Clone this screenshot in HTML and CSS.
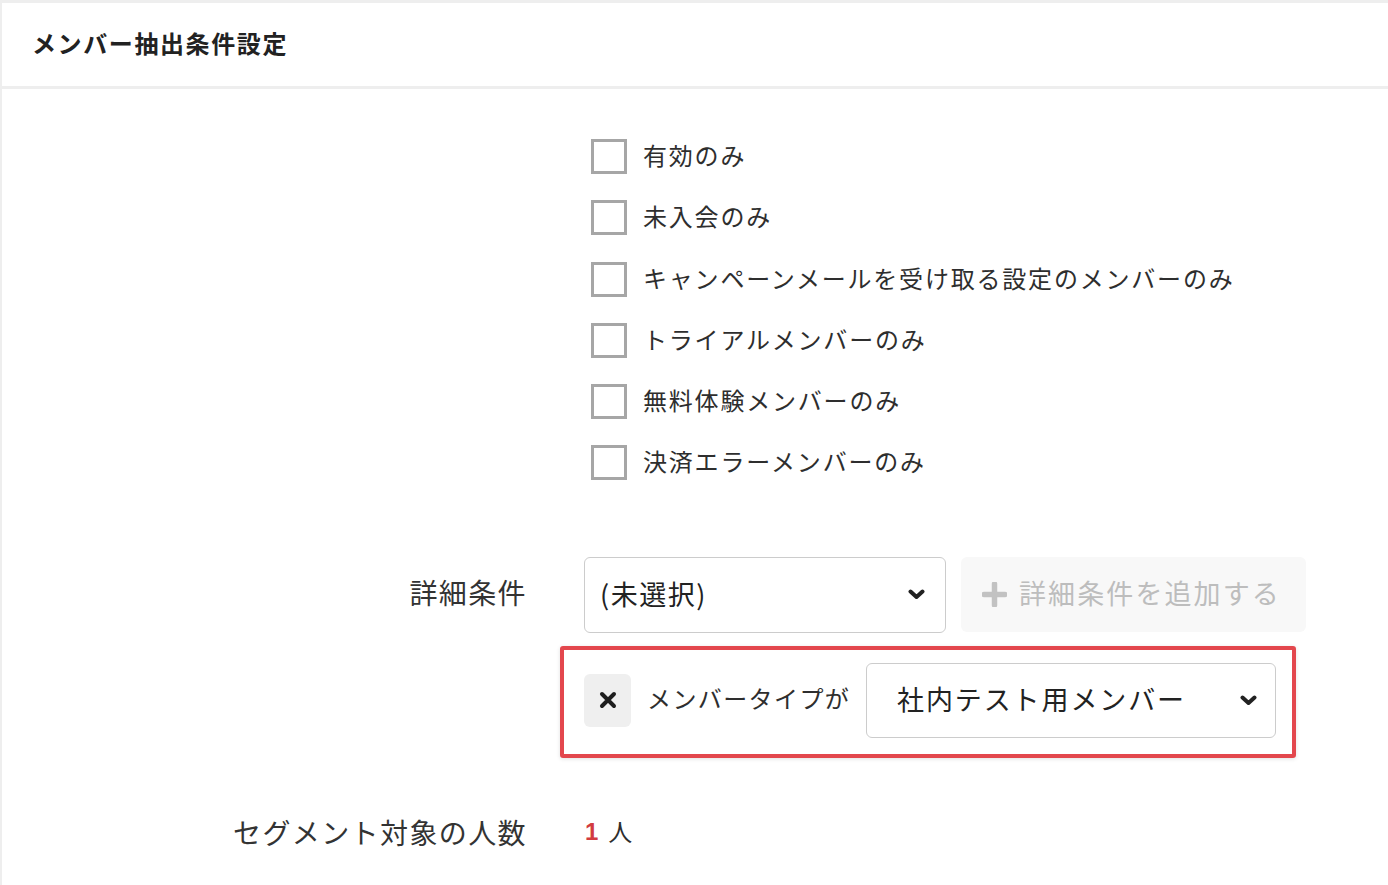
FILE: index.html
```html
<!DOCTYPE html>
<html lang="ja">
<head>
<meta charset="utf-8">
<title>メンバー抽出条件設定</title>
<link rel="stylesheet" href="styles.css">
</head>
<body>
<div class="panel">
  <div class="panel-header">
    <h2 class="panel-title">メンバー抽出条件設定</h2>
  </div>
  <div class="panel-body">
    <div class="form-row row-checks">
      <div class="label"></div>
      <div class="field">
        <ul class="check-list">
          <li class="check-item"><span class="check-box"></span><span class="check-text">有効のみ</span></li>
          <li class="check-item"><span class="check-box"></span><span class="check-text">未入会のみ</span></li>
          <li class="check-item"><span class="check-box"></span><span class="check-text">キャンペーンメールを受け取る設定のメンバーのみ</span></li>
          <li class="check-item"><span class="check-box"></span><span class="check-text">トライアルメンバーのみ</span></li>
          <li class="check-item"><span class="check-box"></span><span class="check-text">無料体験メンバーのみ</span></li>
          <li class="check-item"><span class="check-box"></span><span class="check-text">決済エラーメンバーのみ</span></li>
        </ul>
      </div>
    </div>

    <div class="form-row row-detail">
      <div class="label label-tall">詳細条件</div>
      <div class="field">
        <div class="detail-controls">
          <div class="select select-detail">
            <span class="select-text">(未選択)</span>
            <svg class="chevron" width="17" height="11" viewBox="0 0 17 11"><polyline points="2.5,2.5 8.5,8 14.5,2.5" fill="none" stroke="#222" stroke-width="4" stroke-linecap="round" stroke-linejoin="round"/></svg>
          </div>
          <div class="add-btn">
            <svg class="plus" width="25" height="25" viewBox="0 0 25 25"><path d="M12.5 2v21M2 12.5h21" stroke="#c2c2c2" stroke-width="5.5" stroke-linecap="round"/></svg>
            <span class="add-text">詳細条件を追加する</span>
          </div>
        </div>
        <div class="condition">
          <div class="remove-btn">
            <svg width="18" height="18" viewBox="0 0 18 18"><path d="M3 3l12 12M15 3L3 15" stroke="#1e1e1e" stroke-width="4" stroke-linecap="round"/></svg>
          </div>
          <span class="cond-label">メンバータイプが</span>
          <div class="select select-cond">
            <span class="select-text select-text-cond">社内テスト用メンバー</span>
            <svg class="chevron" width="17" height="11" viewBox="0 0 17 11"><polyline points="2.5,2.5 8.5,8 14.5,2.5" fill="none" stroke="#222" stroke-width="4" stroke-linecap="round" stroke-linejoin="round"/></svg>
          </div>
        </div>
      </div>
    </div>

    <div class="form-row row-count">
      <div class="label label-count">セグメント対象の人数</div>
      <div class="field count-field">
        <span class="count-num">1</span>
        <span class="count-unit">人</span>
      </div>
    </div>
  </div>
</div>
</body>
</html>
```

FILE: styles.css
```css
* {
  box-sizing: border-box;
}

html, body {
  margin: 0;
  padding: 0;
}

body {
  background: #eeeeee;
  font-family: "Noto Sans CJK JP", "Noto Sans", sans-serif;
  color: #333333;
  height: 885px;
  overflow: hidden;
}

.panel {
  margin: 3px 0 0 2px;
  background: #ffffff;
  min-height: 900px;
}

.panel-header {
  height: 86px;
  border-bottom: 3px solid #eeeeee;
  display: flex;
  align-items: center;
  padding-left: 30px;
}

.panel-title {
  margin: 0;
  font-size: 24px;
  font-weight: 700;
  letter-spacing: 1.6px;
  color: #222222;
  line-height: 1;
  padding-bottom: 3px;
}

.panel-body {
  padding-top: 37px;
}

.form-row {
  display: grid;
  grid-template-columns: 525px 1fr;
  column-gap: 57px;
}

.label {
  text-align: right;
  font-size: 28px;
  letter-spacing: 1.4px;
  color: #333333;
}

.check-list {
  list-style: none;
  margin: 0;
  padding: 0 0 0 7px;
}

.check-item {
  height: 61.25px;
  display: flex;
  align-items: center;
  gap: 16px;
}

.check-box {
  width: 36px;
  height: 35px;
  border: 3px solid #a6a6a6;
  background: #ffffff;
  flex: none;
}

.check-text {
  font-size: 24px;
  letter-spacing: 1.8px;
  color: #2e2e2e;
  line-height: 1;
  padding-bottom: 3px;
}

.row-detail {
  margin-top: 63px;
}

.label-tall {
  line-height: 70px;
}

.detail-controls {
  display: flex;
  gap: 15px;
}

.select {
  display: flex;
  align-items: center;
  justify-content: space-between;
  border: 1px solid #cccccc;
  border-radius: 6px;
  background: #ffffff;
}

.select-detail {
  width: 362px;
  height: 76px;
  padding: 0 20px 0 15px;
}

.select-text {
  font-size: 27px;
  letter-spacing: 1.5px;
  color: #222222;
  line-height: 1;
  padding-bottom: 3px;
}

.chevron {
  flex: none;
  display: block;
}

.add-btn {
  width: 345px;
  height: 75px;
  background: #f8f8f8;
  border-radius: 6px;
  display: flex;
  align-items: center;
  padding-left: 21px;
  gap: 12px;
}

.plus {
  display: block;
  flex: none;
}

.add-text {
  font-size: 27px;
  letter-spacing: 2.1px;
  color: #bdbdbd;
  line-height: 1;
  padding-bottom: 3px;
}

.condition {
  margin: 13px 0 0 -24px;
  width: 736px;
  border: 4px solid #e3474d;
  border-radius: 3px;
  padding: 13px 16px 16px 20px;
  display: flex;
  align-items: center;
  box-shadow: 0 1px 4px rgba(0, 0, 0, 0.12);
}

.remove-btn {
  width: 47px;
  height: 53px;
  background: #efefef;
  border-radius: 6px;
  display: flex;
  align-items: center;
  justify-content: center;
  flex: none;
}

.remove-btn svg {
  display: block;
}

.cond-label {
  margin-left: 16px;
  font-size: 24px;
  letter-spacing: 1.4px;
  color: #2e2e2e;
  line-height: 1;
  padding-bottom: 4px;
  flex: none;
}

.select-cond {
  margin-left: auto;
  width: 410px;
  height: 75px;
  padding: 0 18px 0 30px;
}

.select-text-cond {
  letter-spacing: 1.9px;
}

.row-count {
  margin-top: 49px;
  height: 50px;
  align-items: center;
}

.label-count {
  line-height: 46px;
}

.count-field {
  display: flex;
  align-items: center;
  padding-left: 1px;
  gap: 10px;
}

.count-num {
  font-family: "Liberation Sans", Arial, sans-serif;
  font-weight: 700;
  font-size: 24px;
  color: #d23b40;
}

.count-unit {
  font-size: 24px;
  color: #2e2e2e;
  padding-bottom: 2px;
}
```
